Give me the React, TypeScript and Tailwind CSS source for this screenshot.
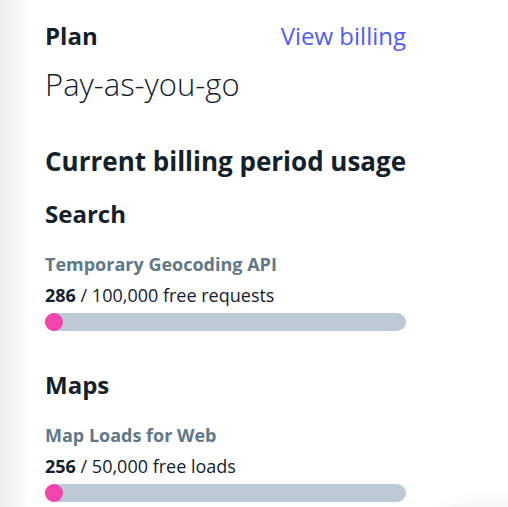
import React from "react";

type Usage = {
  label: string;
  used: number;
  limit: string;
  unit: string;
};

const UsageMeter: React.FC<Usage> = ({ label, used, limit, unit }) => (
  <div>
    <div className="mt-[21px] text-[18px] leading-[26px] font-bold text-[#607889]">{label}</div>
    <div className="mt-[5px] text-[18px] leading-[26px] text-[#13212b]">
      <span className="font-bold">{used}</span> / {limit} {unit}
    </div>
    <div className="mt-[5px] h-[18px] w-[361px] rounded-full bg-[#bccad8]">
      <div className="h-[18px] w-[18px] rounded-full bg-[#f443ad]" />
    </div>
  </div>
);

const App: React.FC = () => {
  return (
    <div className="relative flex h-[507px] w-[508px] overflow-hidden bg-white font-['Open_Sans',sans-serif]">
      {/* left edge shadow */}
      <div className="w-[32px] shrink-0 bg-gradient-to-r from-[#eceeee] to-white" />

      <div className="pl-[13px] pt-[20px] text-[#13212b]">
        {/* PLAN */}
        <div className="flex w-[361px] items-center justify-between">
          <h2 className="text-[24px] leading-[32px] font-bold">Plan</h2>
          <a href="#" className="text-[24px] leading-[32px] text-[#4f5cfb]">
            View billing
          </a>
        </div>
        <div className="mt-[12px] text-[31px] leading-[40px] font-light">Pay-as-you-go</div>

        {/* USAGE */}
        <h2 className="mt-[39px] text-[26px] leading-[36px] font-bold">Current billing period usage</h2>

        <h3 className="mt-[19px] text-[24px] leading-[32px] font-bold">Search</h3>
        <UsageMeter label="Temporary Geocoding API" used={286} limit="100,000" unit="free requests" />

        <h3 className="mt-[38px] text-[24px] leading-[32px] font-bold">Maps</h3>
        <UsageMeter label="Map Loads for Web" used={256} limit="50,000" unit="free loads" />
      </div>

      {/* shadow of the card below */}
      <div className="absolute left-[445px] top-[512px] h-[40px] w-[120px] rounded-md bg-white shadow-[0_0_22px_rgba(0,0,0,0.12)]" />
    </div>
  );
};

export default App;
